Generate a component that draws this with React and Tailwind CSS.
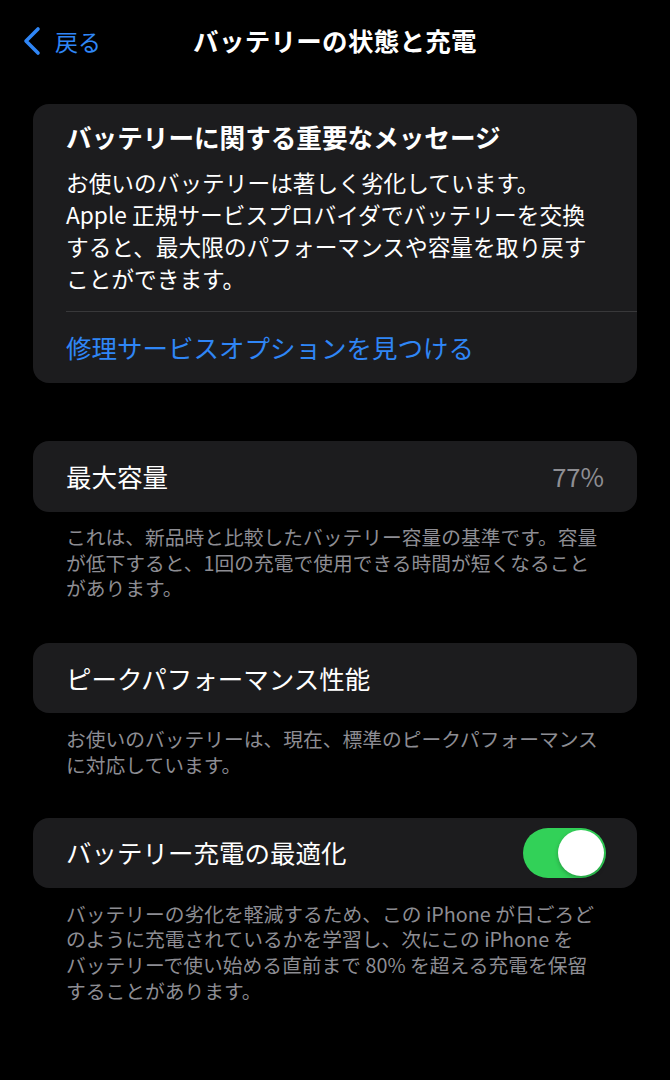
import React from "react";

const font = { fontFamily: '"Noto Sans CJK JP", "Noto Sans", sans-serif' };

function Footer({ lines, className = "" }) {
  return (
    <div className={`text-[19.75px] leading-[25.7px] text-[#8d8d93] ${className}`}>
      {lines.map((l, i) => (
        <div key={i} className="whitespace-nowrap">{l}</div>
      ))}
    </div>
  );
}

export default function App() {
  return (
    <div style={font} className="w-[670px] h-[1080px] bg-black text-white overflow-hidden">
      {/* nav */}
      <div className="relative h-[80px] flex items-center justify-center">
        <div className="absolute left-[22px] top-[26px] flex items-center gap-[13px] text-[#2f86f6]">
          <svg width="20" height="30" viewBox="0 0 20 30" fill="none">
            <path d="M16 3 L4 15 L16 27" stroke="#2f86f6" strokeWidth="3.6" strokeLinecap="round" strokeLinejoin="round" />
          </svg>
          <span className="text-[23px] leading-[28px]">戻る</span>
        </div>
        <div className="text-[25.5px] font-semibold leading-[32px] tracking-[0.3px]">バッテリーの状態と充電</div>
      </div>

      <div className="px-[33px] mt-[24px]">
        {/* card 1 */}
        <div className="bg-[#1c1c1e] rounded-[16px]">
          <div className="px-[33px] pt-[17px]">
            <div className="text-[25.6px] font-bold leading-[32px]">バッテリーに関する重要なメッセージ</div>
            <div className="mt-[14px] text-[22.7px] leading-[32px]">
              <div className="whitespace-nowrap">お使いのバッテリーは著しく劣化しています。</div>
              <div className="whitespace-nowrap">Apple 正規サービスプロバイダでバッテリーを交換</div>
              <div className="whitespace-nowrap">すると、最大限のパフォーマンスや容量を取り戻す</div>
              <div className="whitespace-nowrap">ことができます。</div>
            </div>
          </div>
          <div className="ml-[33px] mt-[16px] h-px bg-[#38383a]" />
          <div className="h-[71px] flex items-center px-[33px] text-[25.5px] text-[#2f86f6]">
            修理サービスオプションを見つける
          </div>
        </div>
      </div>

      {/* card 2 */}
      <div className="px-[33px] mt-[58px]">
        <div className="bg-[#1c1c1e] rounded-[16px] h-[71px] flex items-center justify-between px-[33px]">
          <span className="text-[25.5px]">最大容量</span>
          <span className="text-[25.5px] text-[#8e8e93]">77%</span>
        </div>
      </div>
      <Footer
        className="mt-[12px] px-[66px]"
        lines={[
          "これは、新品時と比較したバッテリー容量の基準です。容量",
          "が低下すると、1回の充電で使用できる時間が短くなること",
          "があります。",
        ]}
      />

      {/* card 3 */}
      <div className="px-[33px] mt-[42px]">
        <div className="bg-[#1c1c1e] rounded-[16px] h-[70px] flex items-center px-[33px]">
          <span className="text-[25.5px]">ピークパフォーマンス性能</span>
        </div>
      </div>
      <Footer
        className="mt-[13px] px-[66px]"
        lines={[
          "お使いのバッテリーは、現在、標準のピークパフォーマンス",
          "に対応しています。",
        ]}
      />

      {/* card 4 */}
      <div className="px-[33px] mt-[40px]">
        <div className="bg-[#1c1c1e] rounded-[16px] h-[70px] flex items-center justify-between pl-[33px] pr-[31px]">
          <span className="text-[25.5px]">バッテリー充電の最適化</span>
          <div className="w-[83px] h-[50px] rounded-full bg-[#32d158] flex items-center justify-end pr-[2px]">
            <div className="w-[46px] h-[46px] rounded-full bg-white shadow-[0_2px_4px_rgba(0,0,0,0.25)]" />
          </div>
        </div>
      </div>
      <Footer
        className="mt-[13px] px-[66px]"
        lines={[
          "バッテリーの劣化を軽減するため、この iPhone が日ごろど",
          "のように充電されているかを学習し、次にこの iPhone を",
          "バッテリーで使い始める直前まで 80% を超える充電を保留",
          "することがあります。",
        ]}
      />
    </div>
  );
}
